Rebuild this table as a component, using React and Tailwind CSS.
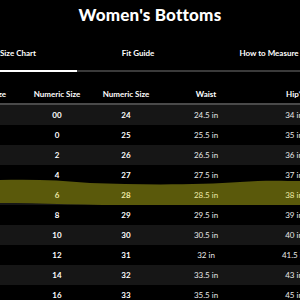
// App.jsx — Women's Bottoms size chart (scrolled table view)

const rows = [
  ['00', '24', '24.5 in', '34 in'],
  ['0', '25', '25.5 in', '35 in'],
  ['2', '26', '26.5 in', '36 in'],
  ['4', '27', '27.5 in', '37 in'],
  ['6', '28', '28.5 in', '38 in'],
  ['8', '29', '29.5 in', '39 in'],
  ['10', '30', '30.5 in', '40 in'],
  ['12', '31', '32 in', '41.5 in'],
  ['14', '32', '33.5 in', '43 in'],
  ['16', '33', '35.5 in', '45 in'],
]

const cols = 'grid grid-cols-[48px_68px_70px_90px_86px] -ml-[25px] text-center'

export default function App() {
  return (
    <div
      className="w-[300px] h-[300px] bg-black text-white overflow-hidden"
      style={{ fontFamily: 'Lato, "Noto Sans", sans-serif' }}
    >
      {/* Title */}
      <h1 className="pt-[2px] h-[30px] text-center text-[17px] font-black tracking-[0.2px]">
        Women's Bottoms
      </h1>

      {/* Tabs */}
      <div className="mt-[13px] flex -ml-[41px] w-max">
        {[
          ['Size Chart', 'w-[118px]', true],
          ['Fit Guide', 'w-[122px]', false],
          ['How to Measure', 'w-[140px]', false],
        ].map(([label, w, active]) => (
          <div key={label} className={`${w} flex flex-col`}>
            <span className="h-[20px] text-center text-[8px] font-bold leading-[20px]">{label}</span>
            <div className={`mt-[7px] h-[2px] ${active ? 'bg-white' : 'bg-[#3a3a3a]'}`} />
          </div>
        ))}
      </div>

      {/* Table header */}
      <div className={`${cols} mt-[13px] h-[20px] items-center text-[8px] font-bold border-b-2 border-[#4a4a4a]`}>
        <span>Size</span>
        <span>Numeric Size</span>
        <span>Numeric Size</span>
        <span>Waist</span>
        <span>Hip*</span>
      </div>

      {rows.map((r, i) => {
        const hl = r[0] === '6'
        return (
          <div
            key={r[0]}
            className={`relative ${cols} h-[20px] items-center text-[8px] ${i % 2 === 0 ? 'bg-[#161616]' : 'bg-black'}`}
          >
            {/* highlighter stroke */}
            {hl && (
              <svg className="absolute left-[25px] -top-[8px] w-[300px] h-[30px]" viewBox="0 0 300 30" preserveAspectRatio="none">
                <path
                  d="M0 3 C30 2 60 3 90 6 C140 8 200 8 240 5 C265 3 285 4 300 4 L300 28 C260 29 200 30 140 29 C90 28 40 26 0 26 Z"
                  fill="#5a590b"
                />
              </svg>
            )}
            <span />
            <span className={`relative font-bold ${hl ? 'text-[#eeeaa8]' : ''}`}>{r[0]}</span>
            <span className={`relative font-bold ${hl ? 'text-[#eeeaa8]' : ''}`}>{r[1]}</span>
            <span className={`relative ${hl ? 'text-[#eeeaa8]' : 'text-[#e8e8e8]'}`}>{r[2]}</span>
            <span className={`relative ${hl ? 'text-[#eeeaa8]' : 'text-[#e8e8e8]'}`}>{r[3]}</span>
          </div>
        )
      })}
    </div>
  )
}
